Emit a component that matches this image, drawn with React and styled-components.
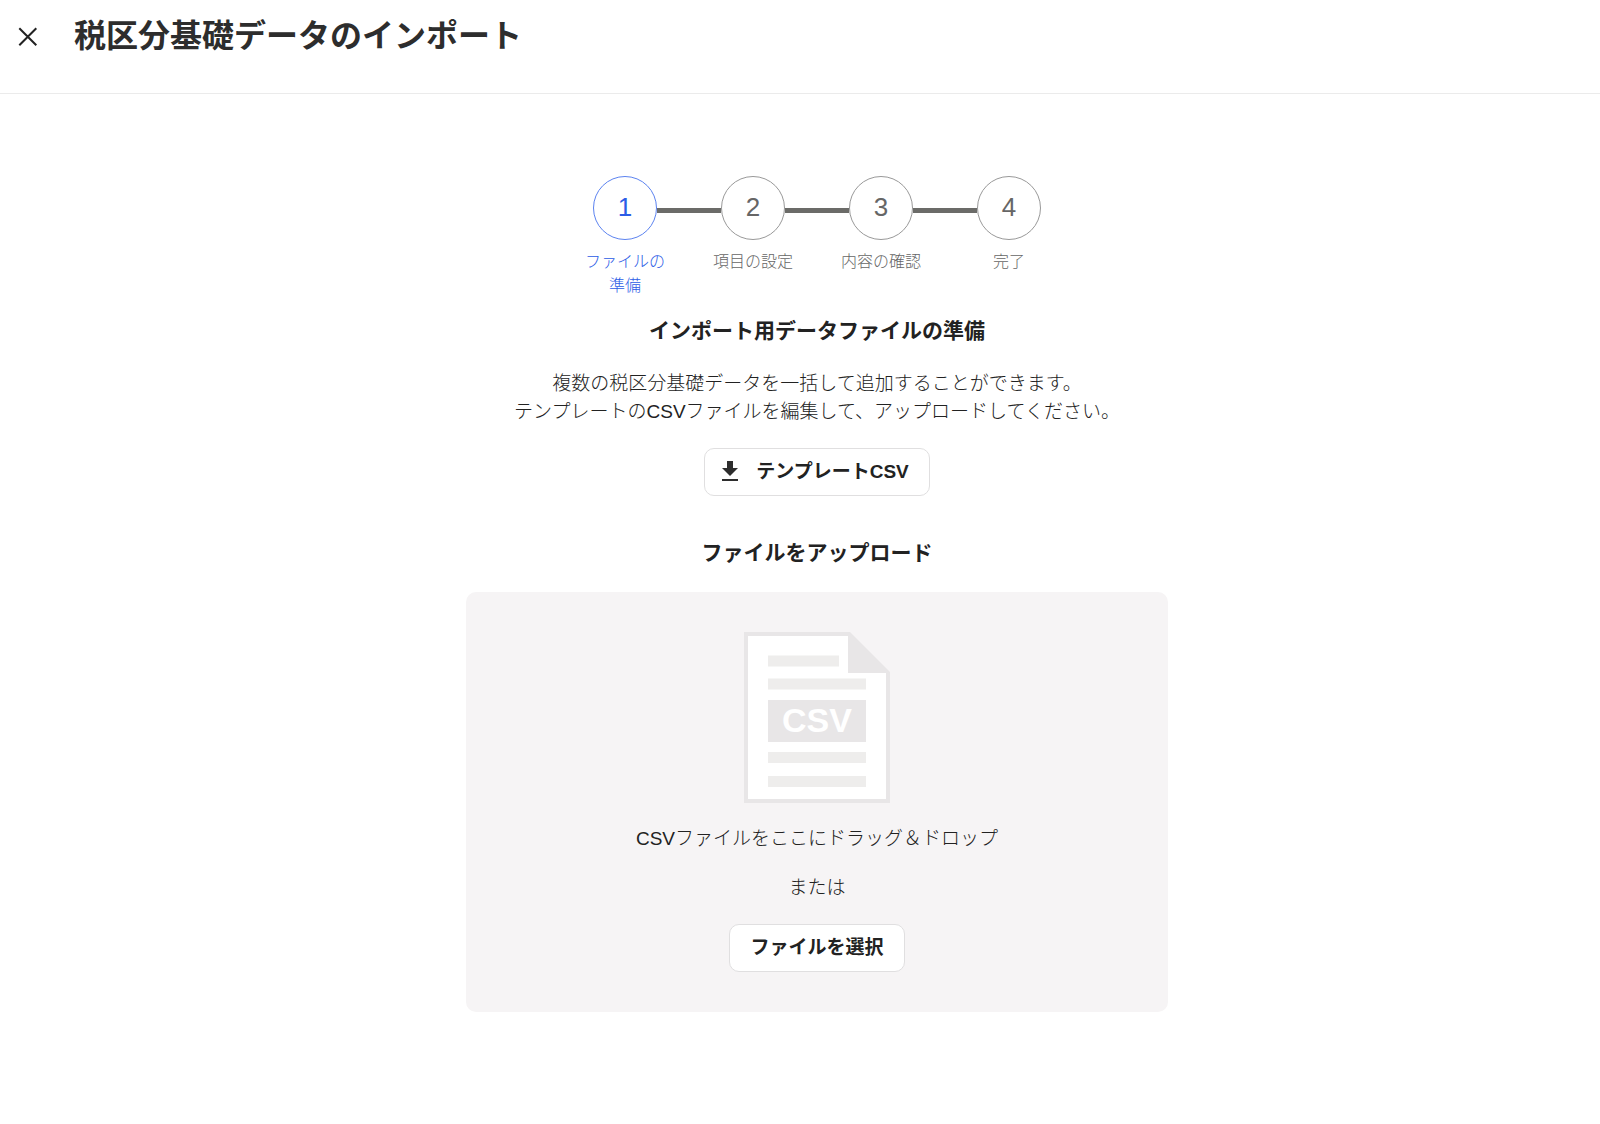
import React, { useRef } from "react";
import styled, { createGlobalStyle } from "styled-components";

const GlobalStyle = createGlobalStyle`
  *, *::before, *::after { box-sizing: border-box; }
  body {
    margin: 0;
    background: #fff;
    color: #222;
    font-family: "Liberation Sans", "Noto Sans CJK JP", sans-serif;
    font-size: 19px;
    font-weight: 300;
    line-height: 28px;
  }
  h1, h2, p, ol { margin: 0; padding: 0; }
`;

const Header = styled.header`
  display: flex;
  align-items: flex-start;
  gap: 34px;
  height: 94px;
  padding: 16px;
  border-bottom: 1px solid #ebebeb;
`;

const CloseButton = styled.button`
  display: flex;
  align-items: center;
  justify-content: center;
  width: 24px;
  height: 40px;
  padding: 0;
  border: 0;
  background: none;
  color: #222;
  cursor: pointer;
`;

const Title = styled.h1`
  font-size: 32px;
  font-weight: 700;
  line-height: 40px;
  color: #2d2d2d;
`;

const Main = styled.main`
  display: flex;
  flex-direction: column;
  align-items: center;
  padding: 82px 0 112px 34px;
  text-align: center;
`;

const Steps = styled.ol`
  display: flex;
  list-style: none;
  margin-bottom: 17px;
`;

const Step = styled.li`
  display: flex;
  flex-direction: column;
  align-items: center;
  gap: 10px;
  width: 128px;
  color: ${(p) => (p.$active ? "#2b5ce6" : "#666")};
`;

const StepTrack = styled.div`
  display: flex;
  align-items: center;
  align-self: stretch;
`;

const Connector = styled.span`
  flex: 1;
  height: 5px;
  margin-top: 5px;
  background: ${(p) => (p.$hidden ? "transparent" : "#6b6b68")};
`;

const StepCircle = styled.span`
  display: flex;
  align-items: center;
  justify-content: center;
  width: 64px;
  height: 64px;
  padding-bottom: 2px;
  border: 1px solid ${(p) => (p.$active ? "#5c83f0" : "#999")};
  border-radius: 50%;
  font-size: 26px;
  font-weight: 400;
`;

const StepLabel = styled.span`
  width: 80px;
  font-size: 16px;
  line-height: 24px;
`;

const Heading = styled.h2`
  font-size: 21px;
  font-weight: 700;
  line-height: 32px;
  color: #222;
`;

const Description = styled.p`
  margin: 23px 0 22px;
`;

const Button = styled.button`
  display: inline-flex;
  align-items: center;
  gap: 14px;
  height: 48px;
  padding: 0 ${(p) => (p.$withIcon ? "20px 0 13px" : "20px")};
  border: 1px solid #e0dfe0;
  border-radius: 10px;
  background: #fff;
  color: #222;
  font: inherit;
  font-weight: 700;
  cursor: pointer;
`;

const UploadSection = styled.section`
  display: flex;
  flex-direction: column;
  align-items: center;
  gap: 23px;
  width: 100%;
  margin-top: 41px;
`;

const DropZone = styled.div`
  display: flex;
  flex-direction: column;
  align-items: center;
  width: 100%;
  max-width: 702px;
  padding: 40px 24px;
  border-radius: 10px;
  background: #f6f4f5;
`;

const DropText = styled.p`
  margin: 22px 0 21px;
`;

const OrText = styled.p`
  margin-bottom: 22px;
`;

const FileInput = styled.input`
  display: none;
`;

const steps = ["ファイルの準備", "項目の設定", "内容の確認", "完了"];

function CloseIcon() {
  return (
    <svg width="24" height="24" viewBox="0 0 24 24" fill="none" stroke="currentColor" strokeWidth="2" aria-hidden="true">
      <path d="M3.300 4.300 20.300 21.300M20.300 4.300 3.300 21.300" />
    </svg>
  );
}

function DownloadIcon() {
  return (
    <svg width="24" height="24" viewBox="0 0 24 24" fill="#2d2d2d" aria-hidden="true">
      <path d="M9 1h6v7h5l-8 8-8-8h5zM4 19h16v2H4z" />
    </svg>
  );
}

function CsvFileIcon() {
  return (
    <svg width="146" height="171" viewBox="0 0 146 171" role="img" aria-label="CSV">
      <path d="M0 0H106L146 40V171H0Z" fill="#e8e6e7" />
      <path d="M4 4H104V41H142V167H4Z" fill="#fff" />
      <path d="M24 23.500H95V34.500H24ZM24 46.500H122V57.500H24ZM24 120H122V131H24ZM24 144H122V155H24Z" fill="#eeedec" />
      <path d="M24 68H122V110H24Z" fill="#e8e6e7" />
      <text x="73" y="100" textAnchor="middle" fontFamily="Liberation Sans, sans-serif" fontSize="34" fontWeight="700" fill="#fff">CSV</text>
    </svg>
  );
}

export default function App() {
  const fileInput = useRef(null);
  return (
    <>
      <GlobalStyle />
      <Header>
        <CloseButton type="button" aria-label="閉じる">
          <CloseIcon />
        </CloseButton>
        <Title>税区分基礎データのインポート</Title>
      </Header>
      <Main>
        <Steps>
          {steps.map((label, i) => (
            <Step key={label} $active={i === 0} aria-current={i === 0 ? "step" : undefined}>
              <StepTrack>
                <Connector $hidden={i === 0} />
                <StepCircle $active={i === 0}>{i + 1}</StepCircle>
                <Connector $hidden={i === steps.length - 1} />
              </StepTrack>
              <StepLabel>{label}</StepLabel>
            </Step>
          ))}
        </Steps>
        <Heading>インポート用データファイルの準備</Heading>
        <Description>
          複数の税区分基礎データを一括して追加することができます。
          <br />
          テンプレートのCSVファイルを編集して、アップロードしてください。
        </Description>
        <Button type="button" $withIcon>
          <DownloadIcon />
          テンプレートCSV
        </Button>
        <UploadSection>
          <Heading>ファイルをアップロード</Heading>
          <DropZone>
            <CsvFileIcon />
            <DropText>CSVファイルをここにドラッグ＆ドロップ</DropText>
            <OrText>または</OrText>
            <FileInput ref={fileInput} type="file" accept=".csv" aria-label="ファイルを選択" />
            <Button type="button" onClick={() => fileInput.current.click()}>
              ファイルを選択
            </Button>
          </DropZone>
        </UploadSection>
      </Main>
    </>
  );
}
